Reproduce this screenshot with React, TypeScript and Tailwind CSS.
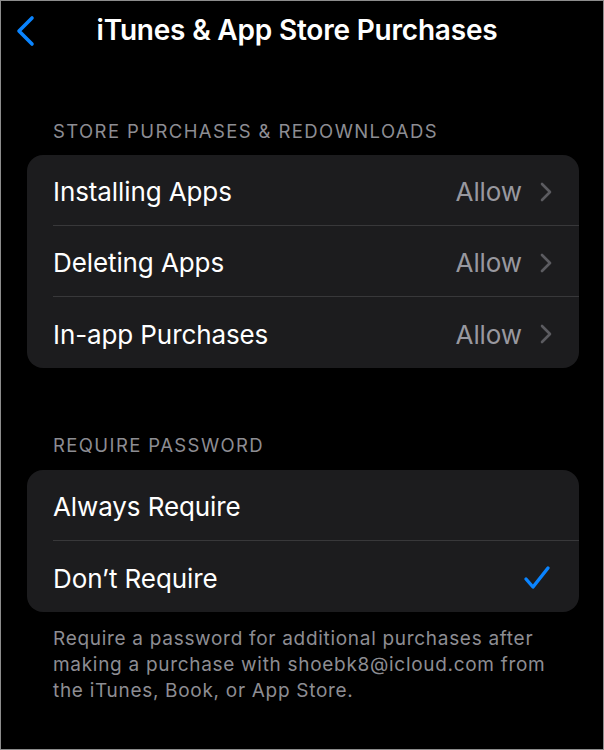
import React from 'react';

const font = { fontFamily: 'Inter, "Noto Sans", sans-serif' };

function Chevron() {
  return (
    <svg width="12" height="20" viewBox="0 0 12 20" fill="none" className="ml-[18px]">
      <path d="M2 2l8 8-8 8" stroke="#5b5b60" strokeWidth="2.6" strokeLinecap="round" strokeLinejoin="round" />
    </svg>
  );
}

function Row({ label, value, last, checked }: { label: string; value?: string; last?: boolean; checked?: boolean }) {
  return (
    <div className="flex h-[71px] items-stretch pl-[26px]">
      <div className={`flex flex-1 items-center pt-[3px] pr-[27px] ${last ? '' : 'border-b border-[#38383a]'}`}>
        <span className="flex-1 text-[26px] text-white tracking-[-0.1px]">{label}</span>
        {value && (
          <>
            <span className="text-[26px] text-[#98989f] tracking-[-0.1px]">{value}</span>
            <Chevron />
          </>
        )}
        {checked && (
          <svg width="28" height="26" viewBox="0 0 28 26" fill="none" className="mt-[-1px] mr-[1px]">
            <path d="M3 14l7 8L25 3" stroke="#0a84ff" strokeWidth="3.4" strokeLinecap="round" strokeLinejoin="round" />
          </svg>
        )}
      </div>
    </div>
  );
}

export default function App() {
  return (
    <div style={font} className="w-[604px] h-[750px] bg-black border border-[#8c8c8c] overflow-hidden">
      <div className="grid grid-cols-[80px_1fr_80px] h-[58px] items-center">
        <div className="pl-[14px] pt-[2px]">
          <svg width="22" height="32" viewBox="0 0 22 32" fill="none">
            <path d="M17 3L4 16l13 13" stroke="#0a84ff" strokeWidth="3.6" strokeLinecap="round" strokeLinejoin="round" />
          </svg>
        </div>
        <h1 className="text-center text-[28px] font-semibold text-white tracking-[-0.2px] -ml-[10px]">
          iTunes &amp; App Store Purchases
        </h1>
        <div />
      </div>

      <div className="mt-[60px] pl-[52px] text-[18.5px] text-[#8d8d93] uppercase tracking-[1.4px] leading-[24px]">
        Store Purchases &amp; Redownloads
      </div>
      <div className="ml-[26px] mr-[24px] mt-[12px] rounded-[16px] bg-[#1c1c1e]">
        <Row label="Installing Apps" value="Allow" />
        <Row label="Deleting Apps" value="Allow" />
        <Row label="In-app Purchases" value="Allow" last />
      </div>

      <div className="mt-[65px] pl-[52px] text-[18.5px] text-[#8d8d93] uppercase tracking-[1.4px] leading-[24px]">
        Require Password
      </div>
      <div className="ml-[26px] mr-[24px] mt-[13px] rounded-[16px] bg-[#1c1c1e]">
        <Row label="Always Require" />
        <Row label="Don’t Require" checked last />
      </div>

      <p className="mt-[14px] pl-[52px] pr-[10px] text-[19px] leading-[26px] tracking-[0.7px] text-[#8d8d93]">
        Require a password for additional purchases after
        <br />
        making a purchase with shoebk8@icloud.com from
        <br />
        the iTunes, Book, or App Store.
      </p>
    </div>
  );
}
